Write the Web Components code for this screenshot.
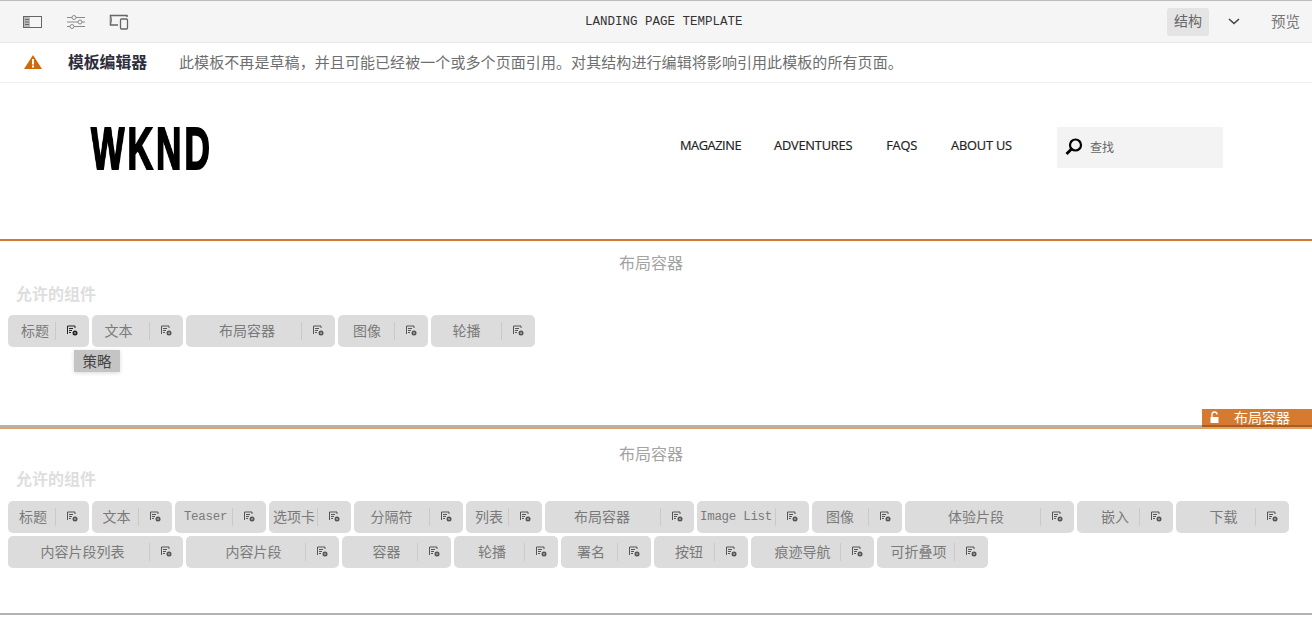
<!DOCTYPE html>
<html lang="zh">
<head>
<meta charset="utf-8">
<title>Landing Page Template</title>
<style>
  html, body { margin: 0; padding: 0; background: #fff; }
  body { font-family: "Noto Sans CJK SC", "Liberation Sans", sans-serif; overflow: hidden; }
</style>
</head>
<body>
<editor-toolbar title="LANDING PAGE TEMPLATE"></editor-toolbar>
<editor-alert heading="模板编辑器">此模板不再是草稿&#xFF0C;并且可能已经被一个或多个页面引用。对其结构进行编辑将影响引用此模板的所有页面。</editor-alert>
<site-header></site-header>
<layout-box id="first" tab="布局容器"></layout-box>
<layout-box id="second" variant="second"></layout-box>

<script>
// editor top bar
class EditorToolbar extends HTMLElement {
    connectedCallback() {
        this.attachShadow({ mode: 'open' });
        this.shadowRoot.innerHTML = `
            <style>
                :host {
                    display: flex;
                    align-items: center;
                    box-sizing: border-box;
                    height: 43px;
                    padding: 0 11px 0 23px;
                    background: #f5f5f5;
                    border-top: 1px solid #bcbcbc;
                    border-bottom: 1px solid #e9e9e9;
                    color: #666;
                }
                .icons { display: flex; align-items: center; gap: 24px; width: 562px; }
                svg { display: block; fill: none; stroke: #8a8a8a; }
                .title {
                    font: 12.5px "Liberation Mono", monospace;
                    color: #333;
                    width: 582px;
                }
                .btn {
                    box-sizing: border-box;
                    width: 42px;
                    height: 28px;
                    line-height: 25px;
                    text-align: center;
                    font-size: 14px;
                    background: #e4e4e4;
                    border-radius: 3px;
                }
                .chev { margin-left: 19px; stroke: #444; }
                .preview { margin-left: 31px; margin-top: -2px; font-size: 14.5px; color: #777; }
            </style>
            <div class="icons">
                <svg width="20" height="14" viewBox="0 0 20 14"><rect x=".5" y="1.5" width="18" height="11" stroke="#666"/><rect x="1" y="2" width="6" height="10" fill="#bbb" stroke="none"/><path d="M2 4.5h4M2 7h4M2 9.500h4" stroke="#666"/></svg>
                <svg width="18" height="14" viewBox="0 0 18 14"><path d="M0 2.500h5M9 2.500h9M0 7h11M15 7h3M0 11.500h3M7 11.500h11"/><circle cx="7" cy="2.500" r="2"/><circle cx="13" cy="7" r="2"/><circle cx="5" cy="11.500" r="2"/></svg>
                <svg width="20" height="16" viewBox="0 0 20 16"><path d="M18 3V1.500H1.500V11H9" stroke="#666" stroke-width="1.500"/><path d="M1 3.500h2v5H1z" fill="#888" stroke="none"/><rect x="11.500" y="5" width="7" height="10" rx="1" stroke="#666" stroke-width="1.300"/></svg>
            </div>
            <div class="title">${this.getAttribute('title')}</div>
            <div class="btn">结构</div>
            <svg class="chev" width="12" height="7" viewBox="0 0 12 7"><path d="M1 1l5 4.500L11 1" stroke-width="1.600"/></svg>
            <div class="preview">预览</div>
        `;
    }
}
customElements.define('editor-toolbar', EditorToolbar);

// warning strip under the toolbar
class EditorAlert extends HTMLElement {
    connectedCallback() {
        this.attachShadow({ mode: 'open' });
        this.shadowRoot.innerHTML = `
            <style>
                :host {
                    display: flex;
                    align-items: center;
                    box-sizing: border-box;
                    height: 40px;
                    padding: 0 0 3px 24px;
                    border-bottom: 1px solid #f0f0f0;
                    background: #fff;
                }
                svg { display: block; margin: 2px 26px 0 0; }
                b { font-size: 15.8px; font-weight: 700; color: #2d2d3c; width: 111px; white-space: nowrap; }
                span { font-size: 15px; letter-spacing: .08px; color: #6e6e6e; white-space: nowrap; }
            </style>
            <svg width="18" height="14" viewBox="0 0 18 14"><path d="M9 0L18 14H0z" fill="#ce6a0c"/><path d="M8 4h2v5.500H8zM8 10.500h2v2H8z" fill="#fff"/></svg>
            <b>${this.getAttribute('heading')}</b>
            <span><slot></slot></span>
        `;
    }
}
customElements.define('editor-alert', EditorAlert);

// site header of the template being edited
class SiteHeader extends HTMLElement {
    connectedCallback() {
        this.attachShadow({ mode: 'open' });
        this.shadowRoot.innerHTML = `
            <style>
                :host {
                    display: flex;
                    box-sizing: border-box;
                    height: 156px;
                    padding: 44px 89px 0 91px;
                    align-items: flex-start;
                    background: #fff;
                }
                .logo { width: 120px; height: 44px; margin-right: 469px; overflow: visible; }
                .logo span {
                    display: block;
                    font: 700 60px/44px "Liberation Sans", sans-serif;
                    color: #000;
                    letter-spacing: 5px;
                    -webkit-text-stroke: 2px #000;
                    transform: scaleX(.59);
                    transform-origin: 0 50%;
                    will-change: transform;
                    white-space: nowrap;
                }
                nav {
                    display: flex;
                    gap: 34px;
                    margin-top: 9px;
                    font: 12.800px/18px "Open Sans", sans-serif;
                    letter-spacing: -.2px;
                    -webkit-text-stroke: .2px #222;
                    color: #222;
                    white-space: nowrap;
                }
                nav span:first-child { letter-spacing: -.45px; margin-right: -1px; }
                .search {
                    display: flex;
                    align-items: center;
                    box-sizing: border-box;
                    width: 166px;
                    height: 41px;
                    margin: 0 0 0 auto;
                    padding: 0 0 2px 8px;
                    background: #f3f3f3;
                    font-size: 12px;
                    color: #666;
                }
                svg { display: block; margin-right: 7px; }
            </style>
            <div class="logo"><span>WKND</span></div>
            <nav><span>MAGAZINE</span><span>ADVENTURES</span><span>FAQS</span><span>ABOUT US</span></nav>
            <div class="search">
                <svg width="18" height="17" viewBox="0 0 18 17"><circle cx="10.500" cy="7" r="5.500" fill="none" stroke="#000" stroke-width="2.200"/><path d="M6.500 11L1.500 16" stroke="#000" stroke-width="2.800"/></svg>
                <span>查找</span>
            </div>
        `;
    }
}
customElements.define('site-header', SiteHeader);

// one allowed component: label, divider, policy icon
class CompChip extends HTMLElement {
    connectedCallback() {
        const width = this.getAttribute('width');
        const shift = this.getAttribute('shift') || 0;
        const latin = /^[A-Za-z ]+$/.test(this.getAttribute('label'));
        const iconColor = this.hasAttribute('hot') ? '#222' : '#555';
        this.attachShadow({ mode: 'open' });
        this.shadowRoot.innerHTML = `
            <style>
                :host {
                    display: flex;
                    align-items: center;
                    position: relative;
                    box-sizing: border-box;
                    width: ${width}px;
                    height: 32px;
                    padding-bottom: 1px;
                    background: #dcdcdc;
                    border-radius: 5px;
                    color: #7a7a7a;
                    font-size: 14px;
                    white-space: nowrap;
                }
                .label {
                    flex: 1;
                    text-align: center;
                    margin-left: ${shift * 2}px;
                    padding-bottom: ${latin ? 0 : 1}px;
                    ${latin ? 'font: 12.5px "Liberation Mono", monospace; letter-spacing: -.3px;' : ''}
                }
                .action {
                    display: flex;
                    align-items: center;
                    justify-content: center;
                    box-sizing: border-box;
                    width: 34px;
                    height: 18px;
                    border-left: 1px solid #cacaca;
                }
                svg { display: block; }
                .tip {
                    position: absolute;
                    left: 66px;
                    top: 35px;
                    width: 46px;
                    height: 22px;
                    line-height: 21px;
                    text-align: center;
                    background: #c4c4c4;
                    box-shadow: 0 1px 4px rgba(0, 0, 0, .15);
                    color: #444;
                    font-size: 14.500px;
                }
            </style>
            <span class="label">${this.getAttribute('label')}</span>
            <span class="action">
                <svg width="11" height="11" viewBox="0 0 11 11"><path d="M.5 9V1H8V3M2 3.500h4M2 5.500h3M2 7.500h2" fill="none" stroke="${iconColor}"/><circle cx="8" cy="8" r="2.500" fill="${iconColor}"/><circle cx="8" cy="8" r=".8" fill="#dcdcdc"/></svg>
            </span>
            ${this.hasAttribute('tip') ? `<div class="tip">${this.getAttribute('tip')}</div>` : ''}
        `;
    }
}
customElements.define('comp-chip', CompChip);

// [label, width, text shift]
const rowsFirst = [
    ['标题', 81, 3.5], ['文本', 91, -2], ['布局容器', 149, 3.5], ['图像', 90, 1], ['轮播', 104, 0.5]
];
const rowsSecond = [
    ['标题', 81, 1.5], ['文本', 80, 1.5], ['Teaser', 91, 2], ['选项卡', 82, 1], ['分隔符', 109, 0], ['列表', 76, 2],
    ['布局容器', 149, -0.5], ['Image List', 112, 0], ['图像', 90, 0], ['体验片段', 169, 3.5], ['嵌入', 96, 7], ['下载', 113, 8],
    ['内容片段列表', 175, 4], ['内容片段', 153, 8], ['容器', 109, 7], ['轮播', 104, 3], ['署名', 90, 2], ['按钮', 94, 5],
    ['痕迹导航', 123, 7], ['可折叠项', 111, 3]
];

// layout container with its title and the list of allowed components
class LayoutBox extends HTMLElement {
    connectedCallback() {
        const second = this.getAttribute('variant') === 'second';
        const tab = this.getAttribute('tab');
        this.attachShadow({ mode: 'open' });
        this.shadowRoot.innerHTML = `
            <style>
                :host {
                    display: block;
                    position: relative;
                    box-sizing: border-box;
                    height: 188px;
                    padding-top: ${second ? 14 : 11}px;
                    border-top: 2px solid ${second ? '#e0a468' : '#d5772d'};
                    border-bottom: 2px solid #b2b2b2;
                    background: #fff;
                }
                .name { text-align: center; font-size: 16px; line-height: 20px; color: #a3a3a3; padding-right: 10px; }
                .allowed { font-size: 16px; font-weight: 700; line-height: 20px; color: #dedede; margin: ${second ? 5 : 11}px 0 0 16px; }
                .chips { display: flex; flex-wrap: wrap; gap: 3px; padding: ${second ? 13 : 12}px 8px 0; }
                .tab {
                    position: absolute;
                    right: 0;
                    bottom: -2px;
                    display: flex;
                    align-items: center;
                    box-sizing: border-box;
                    width: 110px;
                    height: 18px;
                    padding: 0 0 0 7px;
                    background: #d47a31;
                    border-bottom: 2px solid #a85c22;
                    color: #fff;
                    font-size: 14px;
                }
                .tab svg { margin-right: 14px; display: block; }
            </style>
            <div class="name">布局容器</div>
            <div class="allowed">允许的组件</div>
            <div class="chips"></div>
            ${tab ? `<div class="tab"><svg width="11" height="12" viewBox="0 0 11 12"><path d="M3 6V3.500a2.500 2.500 0 0 1 5 0" fill="none" stroke="#fff" stroke-width="1.300"/><rect x="1.500" y="6" width="8" height="6" fill="#fff"/></svg><span>${tab}</span></div>` : ''}
        `;
        const chips = this.shadowRoot.querySelector('.chips');
        (second ? rowsSecond : rowsFirst).forEach(([label, width, shift], i) => {
            const chip = document.createElement('comp-chip');
            chip.setAttribute('label', label);
            chip.setAttribute('width', width);
            chip.setAttribute('shift', shift);
            if (!second && i === 0) {
                chip.setAttribute('hot', '');
                chip.setAttribute('tip', '策略');
            }
            chips.appendChild(chip);
        });
    }
}
customElements.define('layout-box', LayoutBox);
</script>
</body>
</html>
